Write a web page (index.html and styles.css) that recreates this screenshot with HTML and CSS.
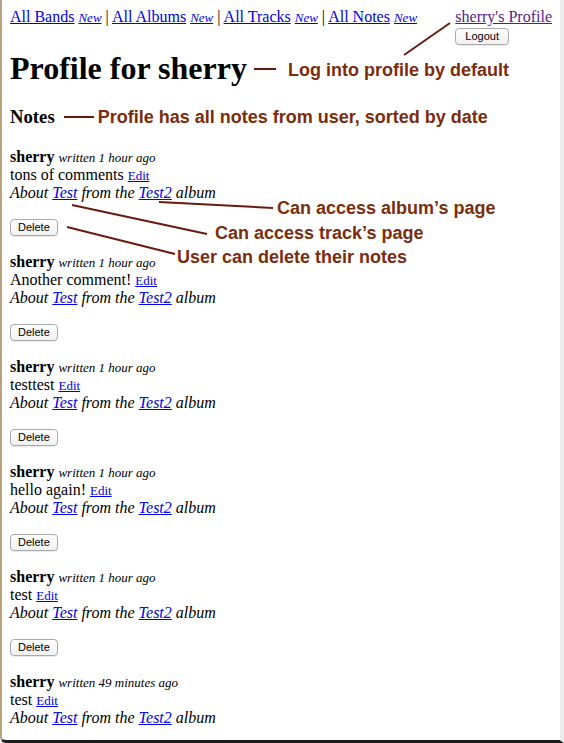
FILE: index.html
```html
<!DOCTYPE html>
<html>
<head>
<meta charset="utf-8">
<title>Profile for sherry</title>
<link rel="stylesheet" href="styles.css">
</head>
<body>
<div class="frame">
  <div class="page">
    <div class="header">
      <div class="nav">
        <a href="#">All Bands</a> <a class="new" href="#">New</a> | <a href="#">All Albums</a> <a class="new" href="#">New</a> | <a href="#">All Tracks</a> <a class="new" href="#">New</a> | <a href="#">All Notes</a> <a class="new" href="#">New</a>
      </div>
      <div class="account">
        <a class="visited" href="#">sherry's Profile</a>
        <button class="btn btn-logout">Logout</button>
      </div>
    </div>

    <div class="title-row">
      <h1 class="title">Profile for sherry</h1>
      <span class="dash dash-h1"></span>
      <span class="note-label label-h1">Log into profile by default</span>
    </div>

    <div class="section-row">
      <h3 class="section">Notes</h3>
      <span class="dash dash-h3"></span>
      <span class="note-label label-h3">Profile has all notes from user, sorted by date</span>
    </div>

    <div class="notes">
      <div class="note">
        <div class="line"><b class="author">sherry</b> <i class="when">written 1 hour ago</i></div>
        <div class="line">tons of comments <a class="small" href="#">Edit</a></div>
        <div class="line about">About <a href="#">Test</a> from the <a href="#">Test2</a> album</div>
        <button class="btn btn-delete">Delete</button>
      </div>
      <div class="note">
        <div class="line"><b class="author">sherry</b> <i class="when">written 1 hour ago</i></div>
        <div class="line">Another comment! <a class="small" href="#">Edit</a></div>
        <div class="line about">About <a href="#">Test</a> from the <a href="#">Test2</a> album</div>
        <button class="btn btn-delete">Delete</button>
      </div>
      <div class="note">
        <div class="line"><b class="author">sherry</b> <i class="when">written 1 hour ago</i></div>
        <div class="line">testtest <a class="small" href="#">Edit</a></div>
        <div class="line about">About <a href="#">Test</a> from the <a href="#">Test2</a> album</div>
        <button class="btn btn-delete">Delete</button>
      </div>
      <div class="note">
        <div class="line"><b class="author">sherry</b> <i class="when">written 1 hour ago</i></div>
        <div class="line">hello again! <a class="small" href="#">Edit</a></div>
        <div class="line about">About <a href="#">Test</a> from the <a href="#">Test2</a> album</div>
        <button class="btn btn-delete">Delete</button>
      </div>
      <div class="note">
        <div class="line"><b class="author">sherry</b> <i class="when">written 1 hour ago</i></div>
        <div class="line">test <a class="small" href="#">Edit</a></div>
        <div class="line about">About <a href="#">Test</a> from the <a href="#">Test2</a> album</div>
        <button class="btn btn-delete">Delete</button>
      </div>
      <div class="note">
        <div class="line"><b class="author">sherry</b> <i class="when">written 49 minutes ago</i></div>
        <div class="line">test <a class="small" href="#">Edit</a></div>
        <div class="line about">About <a href="#">Test</a> from the <a href="#">Test2</a> album</div>
      </div>
    </div>
  </div>

  <svg class="callouts" width="564" height="743" viewBox="0 0 564 743">
    <line x1="404" y1="55" x2="450" y2="23"/>
    <line x1="159" y1="202" x2="273" y2="208"/>
    <line x1="72" y1="205" x2="207" y2="234"/>
    <line x1="67" y1="227" x2="175" y2="254"/>
  </svg>
  <span class="note-label callout-album">Can access album’s page</span>
  <span class="note-label callout-track">Can access track’s page</span>
  <span class="note-label callout-delete">User can delete their notes</span>
</div>
</body>
</html>
```

FILE: styles.css
```css
html, body {
  margin: 0;
  padding: 0;
  overflow: hidden;
  background: #ffffff;
}

.frame {
  position: relative;
  width: 564px;
  height: 743px;
  box-sizing: border-box;
  border-left: 2px solid #b9a27c;
  border-right: 4px solid #ececec;
  border-bottom: 3px solid #1c1c1c;
  border-bottom-left-radius: 6px;
  background: #ffffff;
  overflow: hidden;
  font-family: "Liberation Serif", "Times New Roman", serif;
  font-size: 16px;
  color: #000000;
}

.page {
  padding: 8px 8px 0 8px;
}

a {
  color: #0000ee;
  text-decoration: underline;
}

a.visited {
  color: #551a8b;
}

.header {
  display: flex;
  justify-content: space-between;
  align-items: flex-start;
  line-height: 18px;
}

.nav {
  height: 18px;
}

.nav .new {
  font-size: 13px;
  font-style: italic;
}

.account {
  display: flex;
  flex-direction: column;
  align-items: flex-start;
}

.btn {
  box-sizing: border-box;
  font-family: "Liberation Sans", Arial, sans-serif;
  font-size: 11px;
  line-height: 15px;
  height: 17px;
  color: #000000;
  background: linear-gradient(#ffffff, #f1f1f1);
  border: 1px solid #a9a9a9;
  border-radius: 4px;
  box-shadow: 0 1px 0 rgba(0, 0, 0, 0.08);
  padding: 0 7px;
  margin: 0;
}

.btn-logout {
  margin-top: 2px;
  padding: 0 9px;
}

.title-row {
  display: flex;
  align-items: center;
  margin: 5px 0 19px 0;
}

.title {
  font-size: 32px;
  font-weight: bold;
  line-height: 37px;
  margin: 0;
}

.section-row {
  display: flex;
  align-items: center;
  margin: 0 0 20px 0;
}

.section {
  font-size: 18.72px;
  font-weight: bold;
  line-height: 22px;
  margin: 0;
}

.dash {
  display: block;
  height: 2px;
  background: #6a1a0c;
}

.dash-h1 {
  width: 22px;
  margin: 0 12px 0 7px;
}

.dash-h3 {
  width: 30px;
  margin: 0 4px 0 9px;
}

.note-label {
  font-family: "Liberation Sans", Arial, sans-serif;
  font-weight: bold;
  font-size: 18px;
  line-height: 21px;
  color: #7b2c0c;
  white-space: nowrap;
}

.label-h1 {
  position: relative;
  top: 2px;
}

.notes {
  display: flex;
  flex-direction: column;
}

.note {
  display: flex;
  flex-direction: column;
  align-items: flex-start;
}

.line {
  height: 18px;
  line-height: 18px;
}

.line .when,
.line .small {
  line-height: 1;
}

.author {
  font-weight: bold;
}

.when {
  font-size: 13px;
}

.small {
  font-size: 13px;
}

.about {
  font-style: italic;
}

.btn-delete {
  margin: 17px 0 17px 0;
}

.callouts {
  position: absolute;
  left: -2px;
  top: 0;
  pointer-events: none;
}

.callouts line {
  stroke: #6a1a0c;
  stroke-width: 2;
}

.callout-album {
  position: absolute;
  left: 275px;
  top: 198px;
}

.callout-track {
  position: absolute;
  left: 213px;
  top: 223px;
}

.callout-delete {
  position: absolute;
  left: 175px;
  top: 247px;
}
```
